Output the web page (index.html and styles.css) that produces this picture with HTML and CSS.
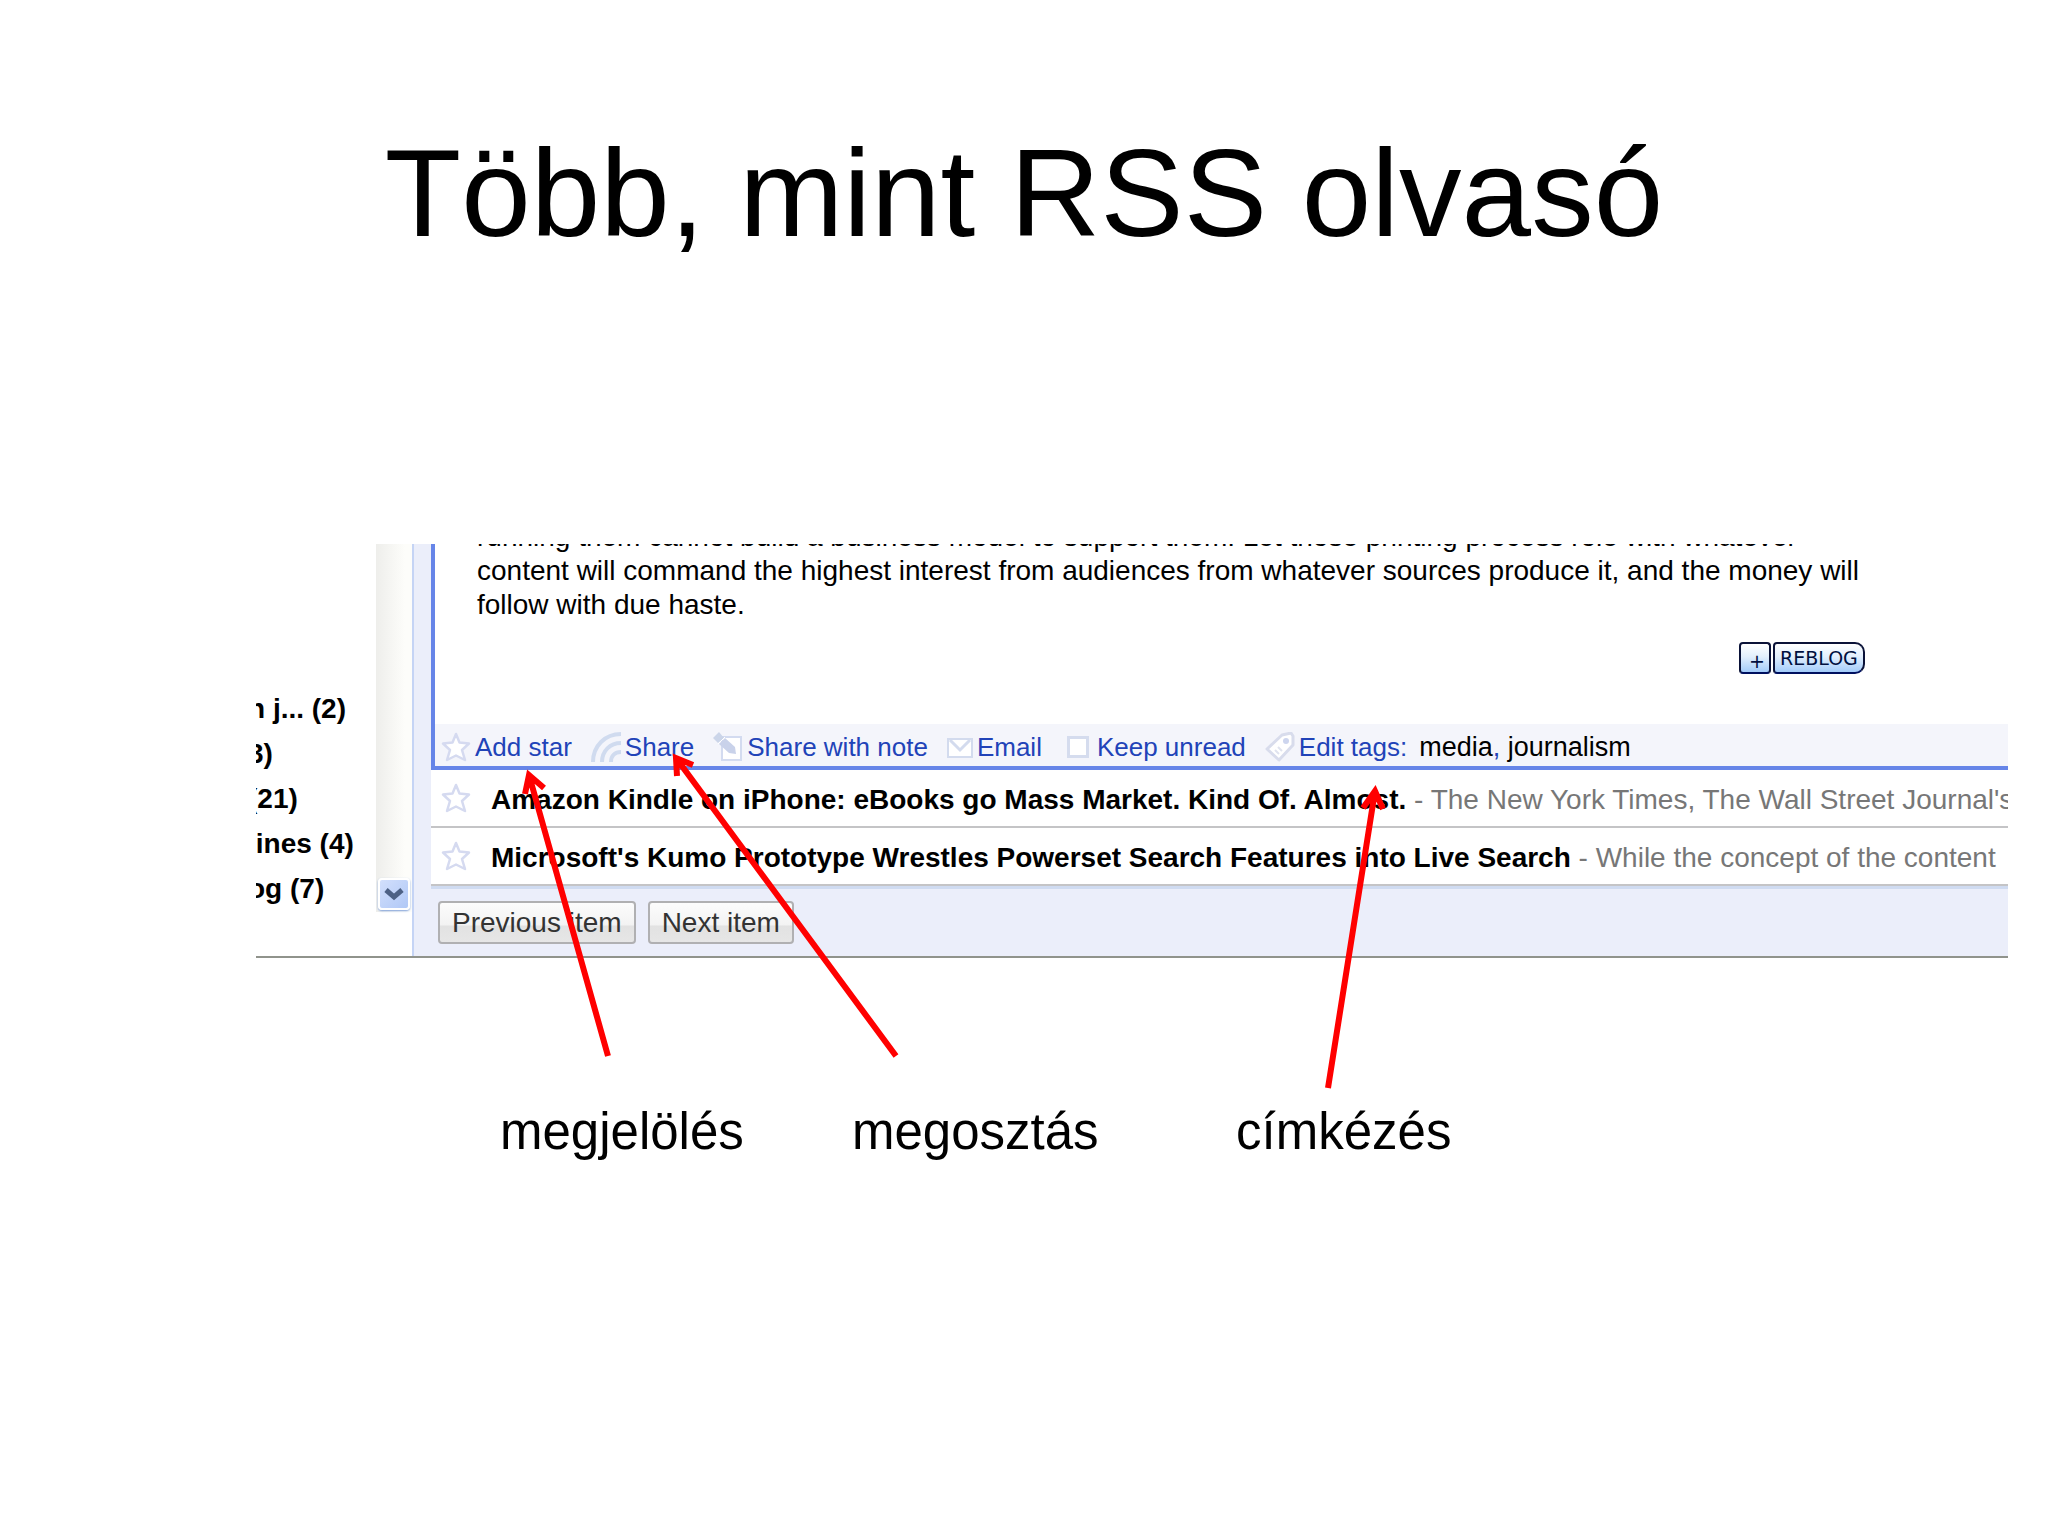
FILE: index.html
```html
<!DOCTYPE html>
<html lang="hu">
<head>
    <meta charset="UTF-8">
    <meta name="viewport" content="width=device-width, initial-scale=1.0">
    <title>Több, mint RSS olvasó</title>
    <link rel="stylesheet" href="styles.css">
</head>
<body>
    <!-- star outline shared by the action bar and the item rows -->
    <svg class="defs" width="0" height="0">
        <symbol id="star" viewBox="0 0 30 30">
            <path d="M15 2 L18.500 10.500 L28 11.500 L21 18 L24 28 L15 23.500 L6 28 L9 18 L2 11.500 L11.500 10.500 Z" fill="#fff" stroke="#d5daf0" stroke-width="2.500" stroke-linejoin="round"/>
        </symbol>
    </svg>

    <main class="slide">
        <h1>Több, mint RSS olvasó</h1>

        <div class="figure">
            <div class="reader">
                <ul class="feeds">
                    <li>n j... (2)</li>
                    <li>3)</li>
                    <li>(21)</li>
                    <li>lines (4)</li>
                    <li>og (7)</li>
                </ul>
                <div class="scrollbar">
                    <button class="scroll-down" aria-label="Scroll down">
                        <svg width="20" height="14" viewBox="0 0 20 14"><path d="M2 3 L10 10 L18 3" fill="none" stroke="#4d6185" stroke-width="5"/></svg>
                    </button>
                </div>
                <div class="items">
                    <article class="entry">
                        <div class="entry-body">
                            <p>running them cannot build a business model to support them. Let those printing process role with whatever<br>
                            content will command the highest interest from audiences from whatever sources produce it, and the money will<br>
                            follow with due haste.</p>
                            <a class="reblog" href="#"><span class="plus">+</span><span class="word">REBLOG</span></a>
                        </div>
                        <div class="actions">
                            <a href="#"><svg width="30" height="30"><use href="#star"/></svg>Add star</a>
                            <a href="#">
                                <svg width="30" height="30" viewBox="0 0 30 30" fill="none" stroke="#d0dbef" stroke-width="4">
                                    <path d="M2 30 C2 14 14 2 30 2"/>
                                    <path d="M11 30 C11 19 19 11 30 11"/>
                                    <path d="M20 30 C20 24 24 20 30 20"/>
                                </svg>Share</a>
                            <a href="#">
                                <svg width="30" height="30" viewBox="0 0 30 30">
                                    <path d="M9 5 H28 V28 H9 Z" fill="#fff" stroke="#d3dbf0" stroke-width="2"/>
                                    <path d="M0 6 L6 0 L11 6 L5 11 Z" fill="#cbd5e9"/>
                                    <path d="M6 12 L12 6 L22 15 L23 22 L16 21 Z" fill="#c9d2ea"/>
                                    <path d="M5 12 L12 5" stroke="#fff" stroke-width="1"/>
                                </svg>Share with note</a>
                            <a href="#">
                                <svg width="26" height="30" viewBox="0 0 26 30" fill="#fff" stroke="#d3dbee" stroke-width="2">
                                    <path d="M1 7 H25 V25 H1 Z"/>
                                    <path d="M3 8 L13 18 L23 8" stroke-width="3"/>
                                </svg>Email</a>
                            <label class="unread"><input type="checkbox">Keep unread</label>
                            <div class="tags">
                                <a href="#">
                                    <svg width="30" height="30" viewBox="0 0 30 30">
                                        <path d="M2 17 L17 3 L26 1 L28 4 L28 13 L14 28 Z" fill="#fff" stroke="#d8dcec" stroke-width="3" stroke-linejoin="round"/>
                                        <path d="M10 18 L14 22 M13 15 L17 19" stroke="#e0e3ef" stroke-width="2"/>
                                        <circle cx="21" cy="9" r="3" fill="#cdd5ee"/>
                                    </svg>Edit tags:</a>
                                <span class="tag-list"><b>media</b>, <b>journalism</b></span>
                            </div>
                        </div>
                    </article>
                    <div class="row">
                        <svg width="30" height="30"><use href="#star"/></svg>
                        <p><strong>Amazon Kindle on iPhone: eBooks go Mass Market. Kind Of. Almost.</strong> - The New York Times, The Wall Street Journal's</p>
                    </div>
                    <div class="row">
                        <svg width="30" height="30"><use href="#star"/></svg>
                        <p><strong>Microsoft's Kumo Prototype Wrestles Powerset Search Features into Live Search</strong> - While the concept of the content</p>
                    </div>
                    <div class="footer">
                        <button>Previous item</button>
                        <button>Next item</button>
                    </div>
                </div>
            </div>

            <svg class="arrows" width="1200" height="560" viewBox="0 0 1200 560">
                <path d="M352 512 L273 231 M269 250 L273 231 L288 244"/>
                <path d="M640 512 L420 214 M421 232 L420 214 L437 221"/>
                <path d="M1072 544 L1119 247 M1107 264 L1119 247 L1127 265"/>
            </svg>
        </div>

        <div class="labels">
            <span>megjelölés</span>
            <span>megosztás</span>
            <span>címkézés</span>
        </div>
    </main>
</body>
</html>
```
FILE: styles.css
```css
* {
    box-sizing: border-box;
}

body {
    margin: 0;
    background-color: #fff;
    color: #000;
    font-family: "Liberation Sans", Arial, sans-serif;
}

.defs {
    position: absolute;
}

.slide {
    min-height: 100vh;
    padding: 121px 40px 0 256px;
}

h1 {
    margin: 0 0 279px -216px;
    font-size: 125px;
    line-height: 144px;
    font-weight: normal;
    text-align: center;
}

.figure {
    position: relative;
}

.reader {
    display: flex;
    height: 414px;
    overflow: hidden;
    border-bottom: 2px solid #90938c;
    font-size: 28px;
}

/* feed list on the left, cut off by the edge */
.feeds {
    width: 120px;
    flex: none;
    margin: 0;
    padding: 142px 0 0;
    list-style: none;
    overflow: hidden;
    font-weight: bold;
    line-height: 45px;
    white-space: nowrap;
}

.feeds li {
    margin-left: -8px;
}

.scrollbar {
    width: 36px;
    flex: none;
    display: flex;
    align-items: flex-end;
    justify-content: center;
    padding-bottom: 2px;
    margin-bottom: 44px;
    background: linear-gradient(to right, #eeeeeb, #fdfdfa 80%);
}

.scroll-down {
    display: flex;
    align-items: center;
    justify-content: center;
    width: 32px;
    height: 32px;
    padding: 0;
    border: 2px solid #fff;
    border-radius: 4px;
    background: linear-gradient(to bottom right, #d2dffc, #b0c8f6);
    box-shadow: 0 1px 2px #7e9fd8;
}

.items {
    flex: 1;
    min-width: 0;
    padding-left: 17px;
    border-left: 2px solid #c5d4f5;
    background-color: #ebeefa;
}

.entry {
    border-left: 4px solid #6685e8;
    border-bottom: 4px solid #6685e8;
    background-color: #fff;
}

.entry-body {
    height: 180px;
    padding: 0 143px 0 42px;
    overflow: hidden;
}

.entry-body p {
    margin: -24px 0 0;
    line-height: 34px;
    white-space: nowrap;
}

.reblog {
    display: flex;
    justify-content: flex-end;
    gap: 2px;
    margin-top: 20px;
    color: #001040;
    font-family: "DejaVu Sans", sans-serif;
    font-size: 19px;
    line-height: 28px;
    text-decoration: none;
}

.reblog span {
    height: 32px;
    border: 2px solid #0a1238;
    border-bottom-color: #00105f;
    border-radius: 4px;
    background: linear-gradient(#fff, #e2effd 45%, #a3ccfa);
}

.reblog .plus {
    width: 32px;
    padding: 4px 4px 0 0;
    line-height: 26px;
    text-align: right;
}

.reblog .word {
    width: 92px;
    padding-left: 5px;
    border-radius: 4px 10px 10px 4px;
}

.actions {
    display: flex;
    align-items: center;
    gap: 19px;
    height: 42px;
    padding: 4px 0 0 6px;
    background-color: #f4f5fb;
    color: #2143b8;
    font-size: 26px;
    white-space: nowrap;
}

.actions a,
.unread {
    display: flex;
    align-items: center;
    gap: 4px;
    color: #2143b8;
    text-decoration: none;
}

.unread {
    gap: 8px;
    padding-left: 6px;
}

.unread input {
    appearance: none;
    width: 22px;
    height: 22px;
    margin: 0;
    border: 3px solid #d5dcee;
    background-color: #fff;
}

.tags {
    display: flex;
    align-items: center;
    gap: 12px;
}

.tag-list {
    font-size: 27px;
}

.tags b {
    color: #000;
    font-weight: normal;
}

.row {
    display: flex;
    align-items: center;
    gap: 20px;
    height: 58px;
    padding-left: 10px;
    border-bottom: 2px solid #c4c4c6;
    background-color: #fff;
    overflow: hidden;
}

.row svg {
    flex: none;
}

.row p {
    margin: 0;
    padding-top: 4px;
    color: #777;
    white-space: nowrap;
}

.row strong {
    color: #000;
}

.footer {
    display: flex;
    gap: 12px;
    padding: 12px 7px;
    border-top: 3px solid #cfdbf1;
}

.footer button {
    height: 43px;
    padding: 0 12px;
    border: 2px solid #b0b0b2;
    border-radius: 4px;
    background: linear-gradient(#fcfcfc, #f3f3f3 55%, #e2e2e2 60%, #e6e6e6);
    color: #333;
    font-family: inherit;
    font-size: inherit;
    white-space: nowrap;
}

/* red arrows lie over the reader and run down to the labels */
.arrows {
    position: absolute;
    top: 0;
    left: 0;
    fill: none;
    stroke: #f00;
    stroke-width: 6;
}

.labels {
    display: grid;
    grid-template-columns: 352px 384px auto;
    padding: 145px 0 0 244px;
    font-size: 51px;
    line-height: 58px;
}
```
